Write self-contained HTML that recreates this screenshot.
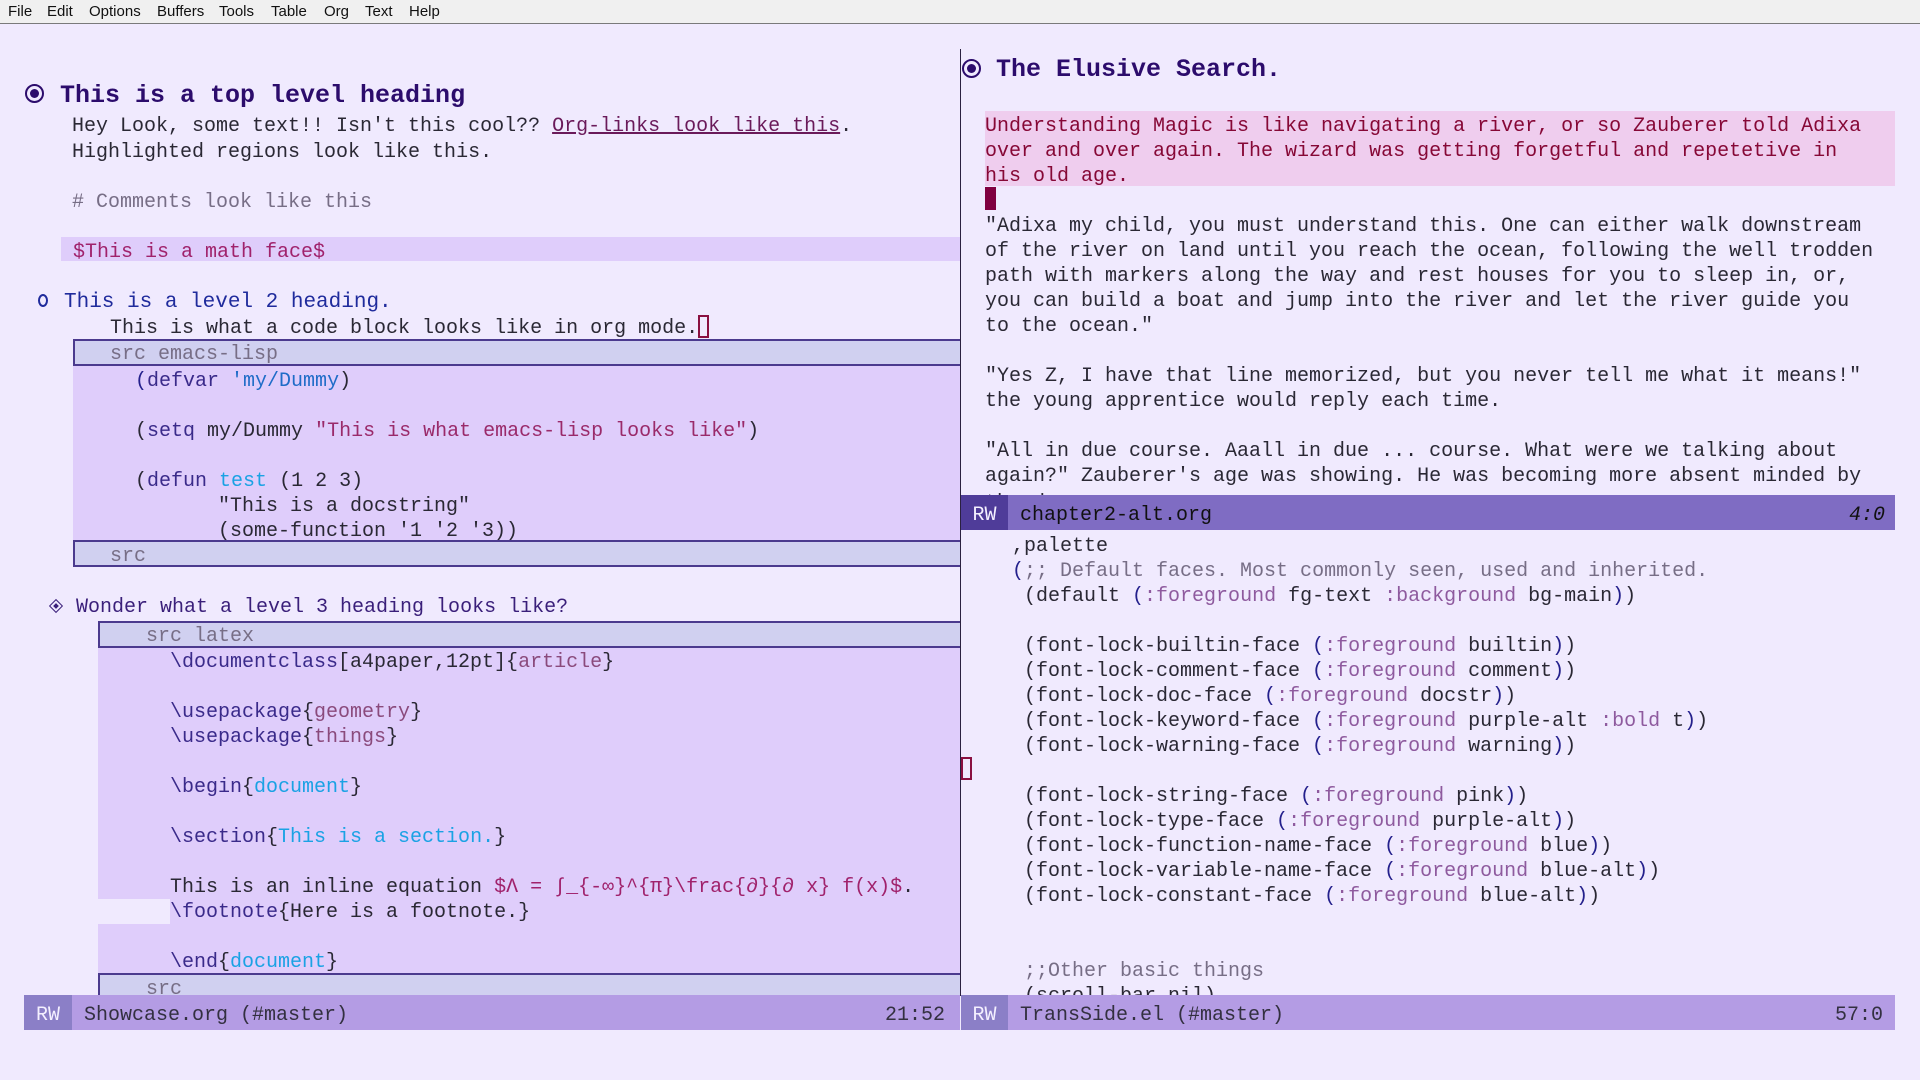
<!DOCTYPE html>
<html><head><meta charset="utf-8">
<style>
*{margin:0;padding:0;box-sizing:border-box}
html,body{width:1920px;height:1080px;overflow:hidden;background:#f0eafe;font-family:"Liberation Mono","DejaVu Sans Mono",monospace;font-size:20px;color:#2a2834}
.a{position:absolute}
.l{position:absolute;height:25px;line-height:25px;white-space:pre;transform:translateY(3px)}
#menu{position:absolute;left:0;top:0;width:1920px;height:24px;background:#f0f0f0;border-bottom:1px solid #7a7a7a;font-family:"Liberation Sans",sans-serif;font-size:15px;color:#111}
#menu span{position:absolute;top:3px}
.h1{font-size:25px;font-weight:bold;color:#2c0c6c;height:30px;line-height:30px}
.bul{position:absolute;width:19px;height:19px;border:2.5px solid #2c0c6c;border-radius:50%}
.bul::after{content:"";position:absolute;left:2.5px;top:2.5px;width:9px;height:9px;border-radius:50%;background:#2c0c6c}
.cm{color:#776e86}
.kw{color:#3a2a8a}
.str{color:#9a2a6a}
.fn{color:#1aa2e4}
.cst{color:#1f6cc8}
.arg{color:#8a4a7c}
.p{color:#24208c}
.kf{color:#8e5a9e}
.hdr{position:absolute;background:#d0d0f0;border-top:2px solid #4b3a8e;border-bottom:2px solid #4b3a8e;border-left:2px solid #4b3a8e;color:#6a6080}
.body{position:absolute;background:#dfcdfb}
.ml{position:absolute;height:35px;line-height:35px;white-space:pre;color:#333040}
.ml span{position:absolute;top:3px}
.rw{position:absolute;top:0;height:35px;padding-top:3px;color:#f4f0ff;text-align:center}
</style></head><body>
<div id="menu"><span style="left:8px">File</span><span style="left:47px">Edit</span><span style="left:89px">Options</span><span style="left:157px">Buffers</span><span style="left:219px">Tools</span><span style="left:271px">Table</span><span style="left:324px">Org</span><span style="left:365px">Text</span><span style="left:409px">Help</span></div>

<!-- LEFT WINDOW -->
<div class="bul" style="left:25px;top:84px"></div>
<div class="l h1" style="left:60px;top:78px">This is a top level heading</div>
<div class="l" style="left:72px;top:111px">Hey Look, some text!! Isn't this cool?? <span style="color:#6a1a5a;text-decoration:underline">Org-links look like this</span>.</div>
<div class="l" style="left:72px;top:137px">Highlighted regions look like this.</div>
<div class="l cm" style="left:72px;top:187px"># Comments look like this</div>
<div class="a" style="left:61px;top:237px;width:899px;height:24px;background:#dfcdfb"></div>
<div class="l" style="left:73px;top:237px;color:#a0226c">$This is a math face$</div>
<div class="a" style="left:38px;top:294px;width:10px;height:13px;border:2px solid #1f2b9c;border-radius:50%"></div>
<div class="l" style="left:64px;top:287px;font-size:21px;color:#1f2b9c">This is a level 2 heading.</div>
<div class="l" style="left:110px;top:313px">This is what a code block looks like in org mode.</div>
<div class="a" style="left:698px;top:315px;width:11px;height:23px;border:2px solid #8a1040"></div>

<div class="hdr" style="left:73px;top:339px;width:887px;height:27px"></div>
<div class="l cm" style="left:110px;top:339px">src emacs-lisp</div>
<div class="body" style="left:73px;top:366px;width:887px;height:174px"></div>
<div class="l" style="left:135px;top:366px"><span class="p">(</span><span class="kw">defvar</span> <span class="cst">'my/Dummy</span>)</div>
<div class="l" style="left:135px;top:416px">(<span class="kw">setq</span> my/Dummy <span class="str">"This is what emacs-lisp looks like"</span>)</div>
<div class="l" style="left:135px;top:466px">(<span class="kw">defun</span> <span class="fn">test</span> (1 2 3)</div>
<div class="l" style="left:218px;top:491px">"This is a docstring"</div>
<div class="l" style="left:218px;top:516px">(some-function '1 '2 '3))</div>
<div class="hdr" style="left:73px;top:540px;width:887px;height:27px"></div>
<div class="l cm" style="left:110px;top:541px">src</div>

<div class="a" style="left:51px;top:601px;width:10px;height:10px;border:1.5px solid #3a1f7a;transform:rotate(45deg)"></div>
<div class="a" style="left:54px;top:604px;width:4px;height:4px;background:#3a1f7a;transform:rotate(45deg)"></div>
<div class="l" style="left:76px;top:592px;color:#3a1f7a">Wonder what a level 3 heading looks like?</div>
<div class="hdr" style="left:98px;top:621px;width:862px;height:27px"></div>
<div class="l cm" style="left:146px;top:621px">src latex</div>
<div class="body" style="left:98px;top:648px;width:862px;height:326px"></div>
<div class="a" style="left:98px;top:899px;width:72px;height:25px;background:#f0eafe"></div>
<div class="l" style="left:170px;top:647px"><span class="kw">\documentclass</span>[a4paper,12pt]{<span class="arg">article</span>}</div>
<div class="l" style="left:170px;top:697px"><span class="kw">\usepackage</span>{<span class="arg">geometry</span>}</div>
<div class="l" style="left:170px;top:722px"><span class="kw">\usepackage</span>{<span class="arg">things</span>}</div>
<div class="l" style="left:170px;top:772px"><span class="kw">\begin</span>{<span class="fn">document</span>}</div>
<div class="l" style="left:170px;top:822px"><span class="kw">\section</span>{<span class="fn">This is a section.</span>}</div>
<div class="l" style="left:170px;top:872px">This is an inline equation <span style="color:#a0226c">$Λ = ∫_{-∞}^{π}\frac{∂}{∂ x} f(x)$</span>.</div>
<div class="l" style="left:170px;top:897px"><span class="kw">\footnote</span>{Here is a footnote.}</div>
<div class="l" style="left:170px;top:947px"><span class="kw">\end</span>{<span class="fn">document</span>}</div>
<div class="hdr" style="left:98px;top:973px;width:862px;height:27px"></div>
<div class="l cm" style="left:146px;top:974px">src</div>

<!-- RIGHT WINDOW -->
<div class="a" style="left:961px;top:24px;width:959px;height:972px;background:#f0eafe"></div>
<div class="a" style="left:960px;top:49px;width:1px;height:947px;background:#2a2040"></div>
<div class="bul" style="left:962px;top:59px"></div>
<div class="l h1" style="left:996px;top:52px">The Elusive Search.</div>
<div class="a" style="left:985px;top:111px;width:910px;height:75px;background:#efcdee"></div>
<div class="l" style="left:985px;top:111px;color:#860836">Understanding Magic is like navigating a river, or so Zauberer told Adixa</div>
<div class="l" style="left:985px;top:136px;color:#860836">over and over again. The wizard was getting forgetful and repetetive in</div>
<div class="l" style="left:985px;top:161px;color:#860836">his old age.</div>
<div class="a" style="left:985px;top:187px;width:11px;height:23px;background:#800040"></div>
<div class="l" style="left:985px;top:211px">"Adixa my child, you must understand this. One can either walk downstream</div>
<div class="l" style="left:985px;top:236px">of the river on land until you reach the ocean, following the well trodden</div>
<div class="l" style="left:985px;top:261px">path with markers along the way and rest houses for you to sleep in, or,</div>
<div class="l" style="left:985px;top:286px">you can build a boat and jump into the river and let the river guide you</div>
<div class="l" style="left:985px;top:311px">to the ocean."</div>
<div class="l" style="left:985px;top:361px">"Yes Z, I have that line memorized, but you never tell me what it means!"</div>
<div class="l" style="left:985px;top:386px">the young apprentice would reply each time.</div>
<div class="l" style="left:985px;top:436px">"All in due course. Aaall in due ... course. What were we talking about</div>
<div class="l" style="left:985px;top:461px">again?" Zauberer's age was showing. He was becoming more absent minded by</div>
<div class="l" style="left:985px;top:488px">the day.</div>

<div class="ml" style="left:961px;top:495px;width:934px;background:#7f6cc3;color:#111"><div class="rw" style="left:0;width:47px;background:#4f3c99">RW</div><span style="left:59px">chapter2-alt.org</span><span style="left:888px;font-style:italic">4:0</span></div>

<div class="l" style="left:1012px;top:531px">,palette</div>
<div class="l cm" style="left:1012px;top:556px"><span class="p">(</span>;; Default faces. Most commonly seen, used and inherited.</div>
<div class="l" style="left:1024px;top:581px">(default <span class="p">(</span><span class="kf">:foreground</span> fg-text <span class="kf">:background</span> bg-main<span class="p">)</span>)</div>
<div class="l" style="left:1024px;top:631px">(font-lock-builtin-face <span class="p">(</span><span class="kf">:foreground</span> builtin<span class="p">)</span>)</div>
<div class="l" style="left:1024px;top:656px">(font-lock-comment-face <span class="p">(</span><span class="kf">:foreground</span> comment<span class="p">)</span>)</div>
<div class="l" style="left:1024px;top:681px">(font-lock-doc-face <span class="p">(</span><span class="kf">:foreground</span> docstr<span class="p">)</span>)</div>
<div class="l" style="left:1024px;top:706px">(font-lock-keyword-face <span class="p">(</span><span class="kf">:foreground</span> purple-alt <span class="kf">:bold</span> t<span class="p">)</span>)</div>
<div class="l" style="left:1024px;top:731px">(font-lock-warning-face <span class="p">(</span><span class="kf">:foreground</span> warning<span class="p">)</span>)</div>
<div class="a" style="left:961px;top:757px;width:11px;height:23px;border:2px solid #8a1040"></div>
<div class="l" style="left:1024px;top:781px">(font-lock-string-face <span class="p">(</span><span class="kf">:foreground</span> pink<span class="p">)</span>)</div>
<div class="l" style="left:1024px;top:806px">(font-lock-type-face <span class="p">(</span><span class="kf">:foreground</span> purple-alt<span class="p">)</span>)</div>
<div class="l" style="left:1024px;top:831px">(font-lock-function-name-face <span class="p">(</span><span class="kf">:foreground</span> blue<span class="p">)</span>)</div>
<div class="l" style="left:1024px;top:856px">(font-lock-variable-name-face <span class="p">(</span><span class="kf">:foreground</span> blue-alt<span class="p">)</span>)</div>
<div class="l" style="left:1024px;top:881px">(font-lock-constant-face <span class="p">(</span><span class="kf">:foreground</span> blue-alt<span class="p">)</span>)</div>
<div class="l cm" style="left:1024px;top:956px">;;Other basic things</div>
<div class="l" style="left:1024px;top:981px">(scroll-bar nil)</div>

<!-- mode lines -->
<div class="ml" style="left:24px;top:995px;width:936px;background:#b49ce4"><div class="rw" style="left:0;width:48px;background:#8b7fc7">RW</div><span style="left:60px">Showcase.org (#master)</span><span style="left:861px">21:52</span></div>
<div class="ml" style="left:961px;top:995px;width:934px;background:#b49ce4"><div class="rw" style="left:0;width:47px;background:#8b7fc7">RW</div><span style="left:59px">TransSide.el (#master)</span><span style="left:874px">57:0</span></div>
</body></html>
